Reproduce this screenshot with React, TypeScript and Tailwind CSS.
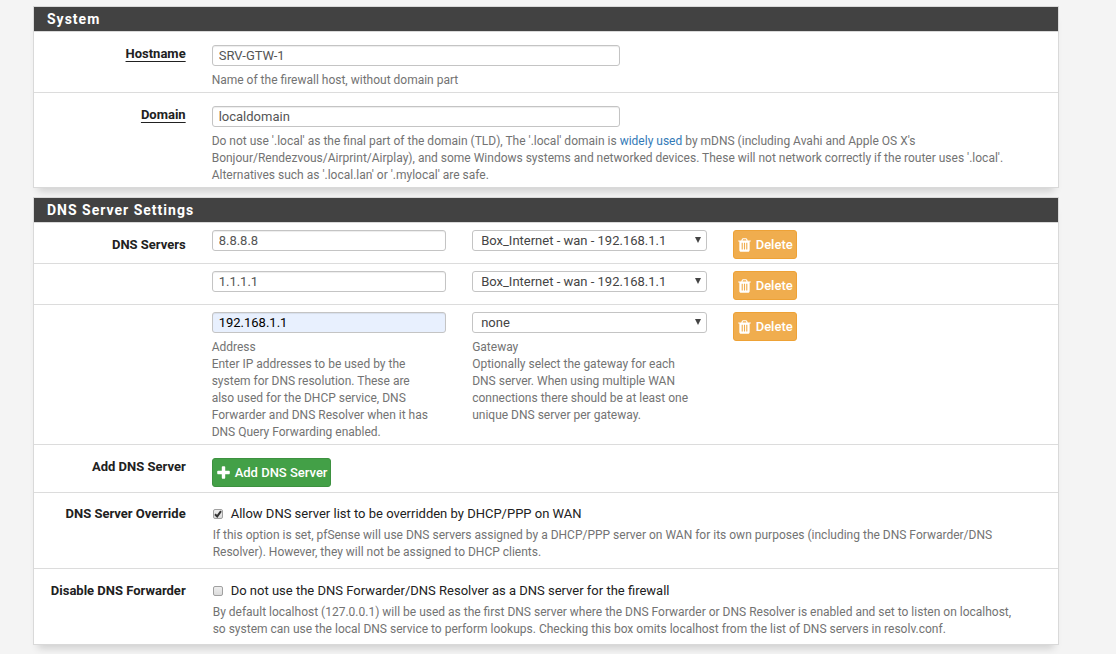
import type { FC, ReactNode } from 'react';

interface DnsServer {
  address: string;
  gateway: string;
  highlighted?: boolean;
}

const GATEWAYS = ['none', 'Box_Internet - wan - 192.168.1.1'];

const DNS_SERVERS: DnsServer[] = [
  { address: '8.8.8.8', gateway: 'Box_Internet - wan - 192.168.1.1' },
  { address: '1.1.1.1', gateway: 'Box_Internet - wan - 192.168.1.1' },
  { address: '192.168.1.1', gateway: 'none', highlighted: true },
];

const INPUT = 'block w-full h-[21px] px-1.5 rounded-[3px] border border-[#c4c4c4] shadow-[inset_0_1px_1px_rgba(0,0,0,0.075)]';

const TrashIcon: FC = () => (
  <svg viewBox="192 0 1408 1792" className="w-[13px] h-4" fill="currentColor" aria-hidden="true">
    <path d="M704 1376v-704q0-14-9-23t-23-9h-64q-14 0-23 9t-9 23v704q0 14 9 23t23 9h64q14 0 23-9t9-23zm256 0v-704q0-14-9-23t-23-9h-64q-14 0-23 9t-9 23v704q0 14 9 23t23 9h64q14 0 23-9t9-23zm256 0v-704q0-14-9-23t-23-9h-64q-14 0-23 9t-9 23v704q0 14 9 23t23 9h64q14 0 23-9t9-23zm-544-992h448l-48-117q-7-9-17-11h-317q-10 2-17 11zm928 32v64q0 14-9 23t-23 9h-96v948q0 83-47 143.5t-113 60.5h-832q-66 0-113-58.5t-47-141.5v-952h-96q-14 0-23-9t-9-23v-64q0-14 9-23t23-9h309l70-167q15-37 54-63t79-26h320q40 0 79 26t54 63l70 167h309q14 0 23 9t9 23z" />
  </svg>
);

const PlusIcon: FC = () => (
  <svg viewBox="192 0 1408 1792" className="w-[13px] h-4" fill="currentColor" aria-hidden="true">
    <path d="M1600 736v192q0 40-28 68t-68 28h-416v416q0 40-28 68t-68 28h-192q-40 0-68-28t-28-68v-416h-416q-40 0-68-28t-28-68v-192q0-40 28-68t68-28h416v-416q0-40 28-68t68-28h192q40 0 68 28t28 68v416h416q40 0 68 28t28 68z" />
  </svg>
);

const Panel: FC<{ title: string; children: ReactNode }> = ({ title, children }) => (
  <section className="bg-white border border-[#d9d9d9] shadow-[0_8px_8px_-5px_rgba(0,0,0,0.16)]">
    <h2 className="h-[25px] pl-[13px] bg-[#424242] border-b border-[#d9d9d9] text-white text-sm font-bold leading-[25px] tracking-[1px]">
      {title}
    </h2>
    <div className="divide-y divide-[#dcdcdc]">{children}</div>
  </section>
);

// 12 column form row, the label always takes the first two
const Row: FC<{ className: string; children: ReactNode }> = ({ className, children }) => (
  <div className={className}>
    <div className="grid grid-cols-12 -mx-[9px] items-start">{children}</div>
  </div>
);

const LABEL = 'col-span-2 px-[13px] text-right font-bold text-[#212121]';
const HELP = 'text-[12px] leading-[17px] text-[#737373]';
const BUTTON = 'flex items-center gap-[5px] h-[29px] pl-1 pr-[3px] rounded-[3px] border text-white font-medium';

const TextField: FC<{ id: string; label: string; value: string; help: ReactNode }> = ({ id, label, value, help }) => (
  <Row className="pt-[13px] pb-[3px]">
    <label htmlFor={id} className={`${LABEL} underline underline-offset-[3px]`}>{label}</label>
    <div className="col-span-10 grid grid-cols-10">
      <div className="col-span-5 px-[13px]">
        <input id={id} type="text" defaultValue={value} className={`${INPUT} text-[#555]`} />
      </div>
      <div className="col-span-10 px-[13px]">
        <p className={`${HELP} mt-1.5`}>{help}</p>
      </div>
    </div>
  </Row>
);

const DnsRow: FC<{ server: DnsServer; index: number; last: boolean }> = ({ server, index, last }) => (
  <Row className={last ? 'pt-[7px] pb-[3px]' : 'pt-[7px] pb-1'}>
    <div className={LABEL}>
      {index === 0 && <label htmlFor="dns0" className="block pt-1.5">DNS Servers</label>}
    </div>
    <div className="col-span-3 px-[13px]">
      <input
        id={`dns${index}`}
        type="text"
        aria-label={index === 0 ? undefined : `DNS server ${index + 1}`}
        defaultValue={server.address}
        className={`${INPUT} ${server.highlighted ? 'bg-[#e8f0fe] text-black' : 'text-[#555]'}`}
      />
      {last && (
        <p className={`${HELP} mt-1.5`}>
          Address<br />
          Enter IP addresses to be used by the<br />
          system for DNS resolution. These are<br />
          also used for the DHCP service, DNS<br />
          Forwarder and DNS Resolver when it has<br />
          DNS Query Forwarding enabled.
        </p>
      )}
    </div>
    <div className="col-span-3 px-[13px]">
      <div className="relative">
        <select
          aria-label={`Gateway ${index + 1}`}
          defaultValue={server.gateway}
          className="block w-full h-[21px] pl-2 pr-4 appearance-none bg-white rounded-[3px] border border-[#c4c4c4] text-[#444]"
        >
          {GATEWAYS.map((gw) => (
            <option key={gw}>{gw}</option>
          ))}
        </select>
        <svg viewBox="0 0 6 6" className="absolute right-1.5 top-[7px] w-1.5 h-1.5 pointer-events-none" fill="#444" aria-hidden="true">
          <path d="M0 0h6L3 6z" />
        </svg>
      </div>
      {last && (
        <p className={`${HELP} mt-1.5`}>
          Gateway<br />
          Optionally select the gateway for each<br />
          DNS server. When using multiple WAN<br />
          connections there should be at least one<br />
          unique DNS server per gateway.
        </p>
      )}
    </div>
    <div className="col-span-2 px-[13px]">
      <button type="button" className={`${BUTTON} border-[#eea236] bg-[#f0ad4e]`}>
        <TrashIcon />
        Delete
      </button>
    </div>
  </Row>
);

interface CheckRowProps {
  id: string;
  label: string;
  text: string;
  checked?: boolean;
  className: string;
  children: ReactNode;
}

const CheckRow: FC<CheckRowProps> = ({ id, label, text, checked, className, children }) => (
  <Row className={className}>
    <div className={LABEL}>{label}</div>
    <div className="col-span-10 px-[13px]">
      <label htmlFor={id} className="flex items-center gap-2 pl-px text-[#212121]">
        <span className="relative flex">
          <input
            id={id}
            type="checkbox"
            defaultChecked={checked}
            className="peer appearance-none w-2.5 h-2.5 rounded-[2px] border border-[#a0a0a0] bg-linear-to-b from-[#eee] to-[#dcdcdc]"
          />
          <svg viewBox="0 0 10 10" className="absolute inset-0 hidden peer-checked:block pointer-events-none" fill="none" stroke="#333" strokeWidth="2" aria-hidden="true">
            <path d="M2 5.2L4.2 7.4L8 2.2" />
          </svg>
        </span>
        {text}
      </label>
      <p className={`${HELP} mt-[5px] pl-px`}>{children}</p>
    </div>
  </Row>
);

const App: FC = () => (
  <main className="min-h-screen bg-[#f4f4f4] pt-1.5 pb-[9px] pl-[33px] pr-[57px] flex flex-col gap-[9px] font-['Roboto',sans-serif] text-[13px] leading-[17px]">
    <Panel title="System">
      <TextField
        id="hostname"
        label="Hostname"
        value="SRV-GTW-1"
        help="Name of the firewall host, without domain part"
      />
      <TextField
        id="domain"
        label="Domain"
        value="localdomain"
        help={
          <>
            Do not use '.local' as the final part of the domain (TLD), The '.local' domain is{' '}
            <a href="#mdns" className="text-[#337ab7]">widely used</a> by mDNS (including Avahi and Apple OS X's<br />
            Bonjour/Rendezvous/Airprint/Airplay), and some Windows systems and networked devices. These will not network
            correctly if the router uses '.local'.<br />
            Alternatives such as '.local.lan' or '.mylocal' are safe.
          </>
        }
      />
    </Panel>

    <Panel title="DNS Server Settings">
      {DNS_SERVERS.map((server, idx) => (
        <DnsRow key={idx} server={server} index={idx} last={idx === DNS_SERVERS.length - 1} />
      ))}
      <Row className="pt-[13px] pb-[5px]">
        <div className={LABEL}>Add DNS Server</div>
        <div className="col-span-10 px-[13px]">
          <button type="button" className={`${BUTTON} border-[#3d9140] bg-[#43a047]`}>
            <PlusIcon />
            Add DNS Server
          </button>
        </div>
      </Row>
      <CheckRow
        id="override"
        label="DNS Server Override"
        text="Allow DNS server list to be overridden by DHCP/PPP on WAN"
        checked
        className="pt-3 pb-[7px]"
      >
        If this option is set, pfSense will use DNS servers assigned by a DHCP/PPP server on WAN for its own purposes
        (including the DNS Forwarder/DNS<br />
        Resolver). However, they will not be assigned to DHCP clients.
      </CheckRow>
      <CheckRow
        id="forwarder"
        label="Disable DNS Forwarder"
        text="Do not use the DNS Forwarder/DNS Resolver as a DNS server for the firewall"
        className="pt-[13px] pb-1.5"
      >
        By default localhost (127.0.0.1) will be used as the first DNS server where the DNS Forwarder or DNS Resolver is
        enabled and set to listen on localhost,<br />
        so system can use the local DNS service to perform lookups. Checking this box omits localhost from the list of
        DNS servers in resolv.conf.
      </CheckRow>
    </Panel>
  </main>
);

export default App;
